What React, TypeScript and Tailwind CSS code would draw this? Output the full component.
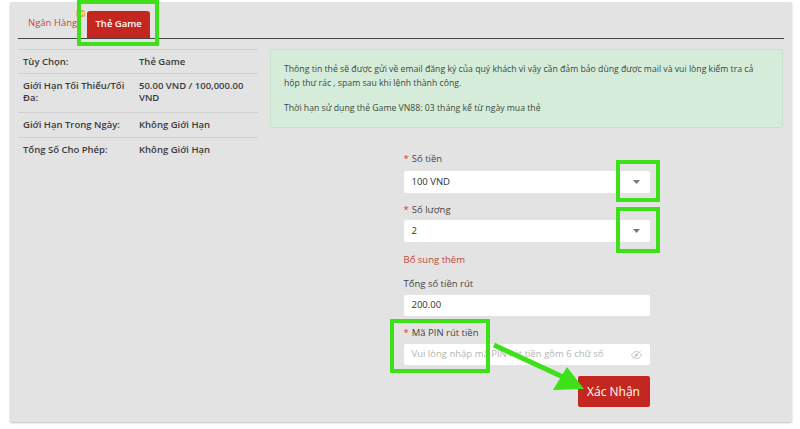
import React from "react";

const rows = [
  { label: "Tùy Chọn:", value: "Thẻ Game", h: "h-[24px]" },
  { label: "Giới Hạn Tối Thiểu/Tối Đa:", value: "50.00 VND / 100,000.00 VND", h: "h-[39px]" },
  { label: "Giới Hạn Trong Ngày:", value: "Không Giới Hạn", h: "h-[25px]" },
  { label: "Tổng Số Cho Phép:", value: "Không Giới Hạn", h: "h-[25px]" },
];

function Caret() {
  return (
    <svg width="7" height="4" viewBox="0 0 7 4" className="mr-[2px]">
      <path d="M0 0h7L3.5 4z" fill="#777" />
    </svg>
  );
}

function Label({ text, req }: { text: string; req?: boolean }) {
  return (
    <div className="text-[9.5px] leading-[12px] text-[#444]">
      {req && <span className="text-[#d9342b] mr-[3px]">*</span>}
      {text}
    </div>
  );
}

export default function App() {
  return (
    <div className="relative w-[800px] h-[429px] bg-white font-['Open_Sans',sans-serif] overflow-hidden">
      <div className="ml-[10px] mt-[2px] w-[782px] h-[420px] bg-[#e3e3e3] rounded-[2px] shadow-[0_1px_2px_rgba(0,0,0,0.25)] px-[8px] pt-[8px]">
        {/* tabs */}
        <div className="flex items-end h-[29px] border-b border-[#444]">
          <div className="relative ml-[10px] pb-[8px] text-[9.5px] text-[#c4463a]">
            Ngân Hàng
            <span className="absolute -right-[8px] -top-[6px] w-[9px] h-[7px] rounded-[2px] bg-[#f0a63b] text-[4px] leading-[7px] text-white text-center font-bold">
              HOT
            </span>
          </div>
          <div className="ml-[10px] w-[63px] h-[27px] bg-[#c4271f] rounded-t-[3px] flex items-center justify-center text-[9.5px] font-semibold text-white">
            Thẻ Game
          </div>
        </div>

        <div className="flex mt-[10px]">
          {/* left table */}
          <div className="w-[240px] border-t border-[#d0d0d0]">
            {rows.map((r, i) => (
              <div
                key={i}
                className={`flex px-[5px] pt-[6px] text-[9.5px] leading-[12px] font-semibold text-[#3a3a3a] ${r.h} ${
                  i < rows.length - 1 ? "border-b border-[#d0d0d0]" : ""
                }`}
              >
                <div className="w-[116px] pr-[6px]">{r.label}</div>
                <div className="flex-1 pr-[6px]">{r.value}</div>
              </div>
            ))}
          </div>

          {/* right */}
          <div className="ml-[12px] w-[513px]">
            <div className="h-[79px] bg-[#d4ecd9] border border-[#c8e3cd] rounded-[2px] px-[13px] pt-[12px] text-[8.7px] leading-[14px] text-[#3d4a40]">
              <p>
                Thông tin thẻ sẽ được gửi về email đăng ký của quý khách vì vậy cần đảm bảo dùng được mail và vui lòng kiểm tra cả hộp thư rác , spam sau khi lệnh thành công.
              </p>
              <p className="mt-[11px]">Thời hạn sử dụng thẻ Game VN88: 03 tháng kể từ ngày mua thẻ</p>
            </div>

            <div className="w-[246px] mx-auto mt-[25px]">
              <Label text="Số tiền" req />
              <div className="mt-[6px] h-[22px] bg-white rounded-[2px] flex items-center justify-between px-[8px] text-[9.5px] text-[#333]">
                <span>100 VND</span>
                <Caret />
              </div>

              <div className="mt-[11px]">
                <Label text="Số lượng" req />
              </div>
              <div className="mt-[4px] h-[22px] bg-white rounded-[2px] flex items-center justify-between px-[8px] text-[9.5px] text-[#333]">
                <span>2</span>
                <Caret />
              </div>

              <div className="mt-[12px] text-[9.5px] leading-[12px] text-[#c4463a]">Bổ sung thêm</div>
              <div className="mt-[12px]">
                <Label text="Tổng số tiền rút" />
              </div>
              <div className="mt-[5px] h-[21px] bg-white rounded-[2px] flex items-center px-[8px] text-[9.5px] text-[#333]">
                200.00
              </div>

              <div className="mt-[11px]">
                <Label text="Mã PIN rút tiền" req />
              </div>
              <div className="mt-[5px] h-[21px] bg-white rounded-[2px] flex items-center justify-between px-[8px] text-[9.5px] text-[#b5b5b5]">
                <span>Vui lòng nhập mã PIN rút tiền gồm 6 chữ số</span>
                <svg width="11" height="8" viewBox="0 0 22 16">
                  <path d="M1 8C4 3 7 1 11 1s7 2 10 7c-3 5-6 7-10 7S4 13 1 8z" fill="none" stroke="#c4c4c4" strokeWidth="2" />
                  <circle cx="11" cy="8" r="3" fill="#c4c4c4" />
                  <path d="M3 15L19 1" stroke="#c4c4c4" strokeWidth="2" />
                </svg>
              </div>

              <div className="flex justify-end mt-[11px]">
                <button className="w-[72px] h-[31px] bg-[#c4271f] rounded-[2px] text-white text-[12px]">Xác Nhận</button>
              </div>
            </div>
          </div>
        </div>
      </div>

      {/* annotations */}
      <svg className="absolute inset-0 pointer-events-none" width="800" height="429">
        <g fill="none" stroke="#3de019" strokeWidth="4">
          <rect x="79" y="2" width="78" height="42" />
          <rect x="618" y="162" width="40" height="38" />
          <rect x="618" y="209" width="40" height="42" />
          <rect x="392" y="321" width="96" height="50" />
          <path d="M494 345L563 377" strokeWidth="5" />
        </g>
        <path d="M584 389L553 390L567 367z" fill="#3de019" />
      </svg>
    </div>
  );
}
